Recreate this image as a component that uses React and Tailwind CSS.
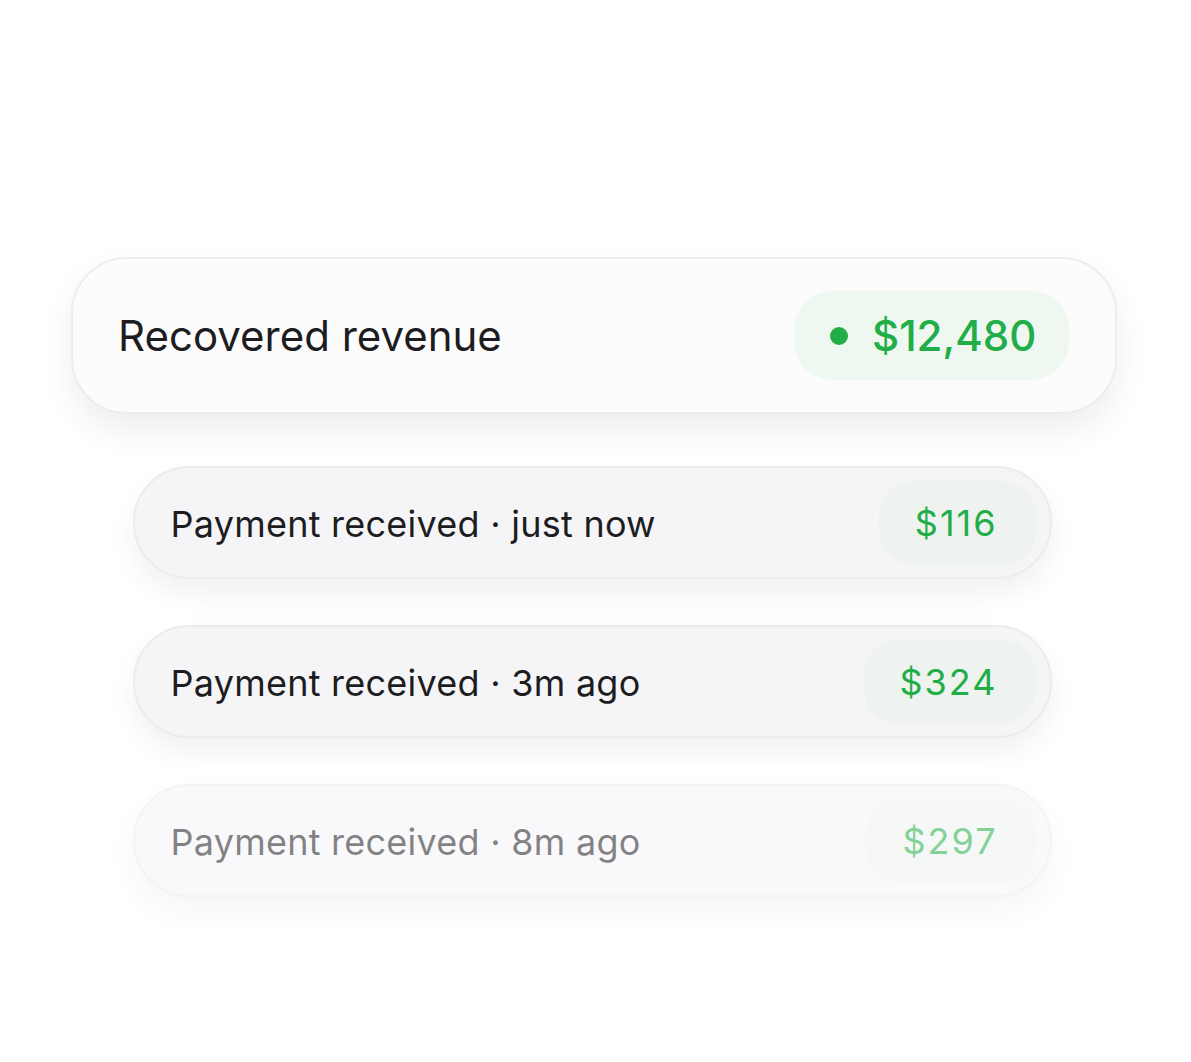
import React from "react";

const rows = [
  { label: "Payment received · just now", amount: "$116", faded: false },
  { label: "Payment received · 3m ago", amount: "$324", faded: false },
  { label: "Payment received · 8m ago", amount: "$297", faded: true },
];

function PaymentRow({ label, amount, faded }) {
  return (
    <div
      className={`w-[919px] h-[113px] flex items-center justify-between pl-[36px] pr-[14px] rounded-[56px] bg-[#f5f5f8] border-2 border-[#ececef] shadow-[0_14px_28px_rgba(0,0,0,0.06)] ${
        faded ? "opacity-[0.55]" : ""
      }`}
    >
      <span className="text-[36px] leading-none text-[#1d1d1f] tracking-[0.25px] mt-[3px]">
        {label}
      </span>
      <span className="h-[84px] flex items-center pl-[36px] pr-[38px] rounded-[34px] bg-[#eef3f0] text-[36px] leading-none text-[#21ad47] tracking-[2px]">
        {amount}
      </span>
    </div>
  );
}

export default function App() {
  return (
    <div
      className="min-h-screen bg-white flex flex-col items-center pt-[257px]"
      style={{ fontFamily: "Inter, 'Noto Sans', sans-serif" }}
    >
      <div className="w-[1046px] h-[157px] flex items-center justify-between pl-[45px] pr-[46px] rounded-[56px] bg-[#fcfcfd] border-2 border-[#ededf0] shadow-[0_16px_34px_rgba(0,0,0,0.07)] ml-[-3px]">
        <span className="text-[42px] leading-none text-[#1d1d1f]">
          Recovered revenue
        </span>
        <span className="w-[275px] h-[89px] flex items-center gap-[24px] pl-[36px] rounded-[38px] bg-[#eef7f0]">
          <span className="w-[18px] h-[18px] rounded-full bg-[#21ad47]" />
          <span className="text-[42px] leading-none font-medium text-[#21ad47]">
            $12,480
          </span>
        </span>
      </div>

      <div className="flex flex-col gap-[46px] mt-[52px] ml-[-7px]">
        {rows.map((r) => (
          <PaymentRow key={r.amount} {...r} />
        ))}
      </div>
    </div>
  );
}
